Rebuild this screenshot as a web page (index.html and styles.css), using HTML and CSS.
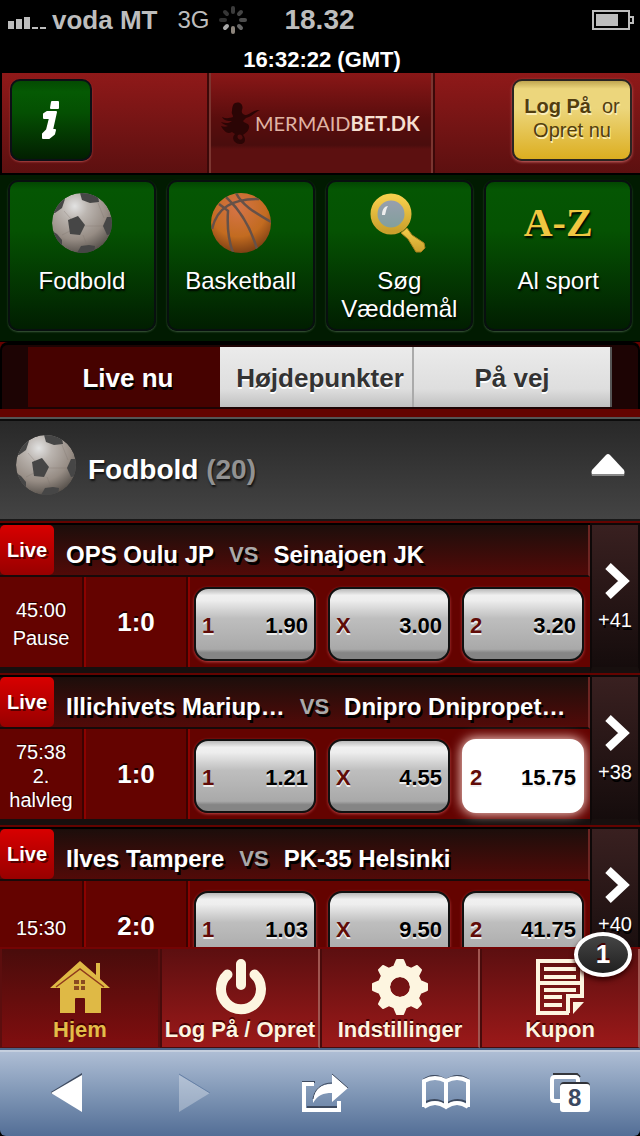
FILE: index.html
```html
<!DOCTYPE html>
<html lang="da">
<head>
<meta charset="utf-8">
<meta name="viewport" content="width=device-width">
<title>MermaidBet.dk</title>
<link rel="stylesheet" href="styles.css">
</head>
<body>
<svg class="defs" aria-hidden="true">
  <defs>
    <radialGradient id="leather" cx="0.38" cy="0.22" r="0.85">
      <stop offset="0" stop-color="#e2e2e2"/><stop offset="0.25" stop-color="#bcb6b1"/><stop offset="0.65" stop-color="#968c84"/><stop offset="1" stop-color="#4a4540"/>
    </radialGradient>
    <radialGradient id="rubber" cx="0.45" cy="0.25" r="0.8">
      <stop offset="0" stop-color="#d67448"/><stop offset="0.6" stop-color="#c26b20"/><stop offset="1" stop-color="#713812"/>
    </radialGradient>
    <linearGradient id="gold" x1="0" y1="0" x2="0" y2="1">
      <stop offset="0" stop-color="#f6cf4c"/><stop offset="1" stop-color="#caa02c"/>
    </linearGradient>
    <linearGradient id="lens" x1="0" y1="0" x2="0" y2="1">
      <stop offset="0" stop-color="#9a9fb0"/><stop offset="1" stop-color="#7f9f9a"/>
    </linearGradient>
    <clipPath id="round"><circle cx="30" cy="30" r="30"/></clipPath>
    <symbol id="football" viewBox="0 0 60 60">
      <g clip-path="url(#round)">
        <circle cx="30" cy="30" r="30" fill="url(#leather)"/>
        <g fill="none" stroke="#7d756e" stroke-opacity="0.3">
          <path d="M12 18l7 8M33 33h19M31 42l4 10M18 38l-8 4M46 10l6 15"/>
        </g>
        <g fill="#464646">
          <path d="M16 27l10-4 7 9-5 10-10-1z"/>
          <path d="M28 0l2 7 8 3 9-1-1-6-8-4z"/>
          <path d="M0 20l3 0 7-5 3-9-5 1-8 9z"/>
          <path d="M60 24l-5 0-4 9 4 9 5-1z"/>
          <path d="M25 60l4-7 8-1 6 1-1 8z"/>
          <path d="M0 38l5 3 5 6 0 8-4-2-7-10z"/>
        </g>
      </g>
    </symbol>
  </defs>
</svg>

<div class="app">
  <div class="status">
    <svg class="signal" viewBox="0 0 38 12" width="38" height="12" fill="#bdbdbd" aria-hidden="true"><path d="M0 4h6v8H0zM8 2h6v10H8zM16 0h6v12h-6zM24 10h6v2h-6zM32 10h6v2h-6z"/></svg>
    <span class="carrier">voda MT</span>
    <span class="network">3G</span>
    <svg class="spinner" viewBox="-14 -14 28 28" width="28" height="28" stroke-width="4" stroke-linecap="round" aria-hidden="true">
      <path d="M0-8v-4" stroke="#3c3c3c"/><path d="M6-6l2-2" stroke="#444"/><path d="M8 0h4" stroke="#4c4c4c"/><path d="M6 6l2 2" stroke="#666"/><path d="M0 8v4" stroke="#8d857c"/><path d="M-6 6l-2 2" stroke="#aaa"/><path d="M-8 0h-4" stroke="#303030"/><path d="M-6-6l-2-2" stroke="#363636"/>
    </svg>
    <span class="time">18.32</span>
    <svg class="battery" viewBox="0 0 42 20" width="42" height="20" aria-hidden="true"><path d="M1 1h36v18H1z" fill="none" stroke="#bdbdbd" stroke-width="2"/><path d="M38 7h3v6h-3" fill="none" stroke="#bdbdbd" stroke-width="2"/><path d="M4 4h22v12H4z" fill="#bdbdbd"/></svg>
  </div>
  <div class="clock">16:32:22 (GMT)</div>

  <header class="header">
    <button class="info" aria-label="Info">
      <svg viewBox="0 0 20 40" width="20" height="40" fill="#fff" stroke="#fff" stroke-linejoin="round" aria-hidden="true"><path d="M11 2h6v6h-7zM3 14l3-2h9l-4 18h3l-1 4-5 4H2v-4l4-4 3-12H3z" stroke-width="2"/></svg>
    </button>
    <a class="logo" href="#">
      <svg viewBox="0 0 40 42" width="40" height="42" aria-hidden="true"><path fill="#2b0505" d="M14 1c5-2 9 2 7 7-1 3 1 4 3 5 5 0 7-5 15-5-5 2-8 7-14 8l-3 3c2 3 7 2 6 7-1 4-4 5-6 7 3 3 3 9-3 9s-9-6-5-10l-3-2c-4 2-7 1-11-6 3 1 5 1 7 0-4-1-6-3-7-4 5 2 9 1 11-1-4 0-8 0-10-4 4 2 8 1 11 0 0-3-2-3-1-6 0-4 1-7 3-8zM17 33c-2 3 2 6 4 4s-1-6-4-4z"/></svg>
      <span class="word">MERMAID<b>BET.DK</b></span>
    </a>
    <a class="login" href="#"><span><b>Log På</b>&nbsp; or</span><span>Opret nu</span></a>
  </header>

  <nav class="sports">
    <a class="tile" href="#"><svg width="60" height="60" aria-hidden="true"><use href="#football"/></svg><span>Fodbold</span></a>
    <a class="tile" href="#">
      <svg viewBox="0 0 60 60" width="60" height="60" aria-hidden="true"><circle cx="30" cy="30" r="30" fill="url(#rubber)"/><g clip-path="url(#round)" fill="none" stroke="#665148" stroke-width="2.500"><path d="M1 36C6 14 22 6 48 6M8 11c4 3 7 5 9 7-1 15 0 28 5 42M15 4c13 12 24 28 31 52M25 0c6 12 18 19 35 29"/></g></svg>
      <span>Basketball</span></a>
    <a class="tile" href="#">
      <svg viewBox="0 0 60 60" width="60" height="60" aria-hidden="true"><path d="M32 40l6-5 5 7 12 8 1 5-4 4h-5l-8-13z" fill="url(#gold)" stroke="#a67f1d"/><circle cx="22" cy="21" r="17" fill="url(#lens)" stroke="url(#gold)" stroke-width="7"/><path d="M13 22c0-6 3-9 6-9-2 3-2 6-3 9z" fill="#eee"/></svg>
      <span>Søg Væddemål</span></a>
    <a class="tile" href="#"><span class="az">A-Z</span><span>Al sport</span></a>
  </nav>

  <div class="tabs">
    <div class="tabrow">
      <button class="tab active">Live nu</button>
      <button class="tab middle">Højdepunkter</button>
      <button class="tab">På vej</button>
    </div>
  </div>

  <main class="events">
    <h2 class="group">
      <svg width="60" height="60" aria-hidden="true"><use href="#football"/></svg>
      <span class="groupname">Fodbold <span class="count">(20)</span></span>
      <svg class="fold" viewBox="0 0 34 24" width="34" height="24" aria-hidden="true"><path d="M15 3q2-2 4 0l14 15q1 3 0 5H1q-1-2 0-5z" fill="#888"/><path d="M15 2q2-2 4 0l14 15q1 2 0 4H1q-1-2 0-4z" fill="#fff"/></svg>
    </h2>

    <article class="match">
      <div class="main">
        <div class="head"><span class="live">Live</span><div class="teams"><span>OPS Oulu JP</span><span class="vs">VS</span><span>Seinajoen JK</span></div></div>
        <div class="body">
          <div class="period loose"><span>45:00</span><span>Pause</span></div>
          <div class="score">1:0</div>
          <div class="odds">
            <button class="odd"><span class="pick">1</span><span>1.90</span></button>
            <button class="odd"><span class="pick">X</span><span>3.00</span></button>
            <button class="odd"><span class="pick">2</span><span>3.20</span></button>
          </div>
        </div>
      </div>
      <a class="more" href="#"><svg viewBox="0 0 28 40" width="28" height="40" aria-hidden="true"><path d="M5 5l16 15L5 35" fill="none" stroke="#fff" stroke-width="8"/></svg><span>+41</span></a>
    </article>

    <article class="match">
      <div class="main">
        <div class="head"><span class="live">Live</span><div class="teams"><span>Illichivets Mariup…</span><span class="vs">VS</span><span>Dnipro Dnipropet…</span></div></div>
        <div class="body">
          <div class="period"><span>75:38</span><span>2. halvleg</span></div>
          <div class="score">1:0</div>
          <div class="odds">
            <button class="odd"><span class="pick">1</span><span>1.21</span></button>
            <button class="odd"><span class="pick">X</span><span>4.55</span></button>
            <button class="odd chosen"><span class="pick">2</span><span>15.75</span></button>
          </div>
        </div>
      </div>
      <a class="more" href="#"><svg viewBox="0 0 28 40" width="28" height="40" aria-hidden="true"><path d="M5 5l16 15L5 35" fill="none" stroke="#fff" stroke-width="8"/></svg><span>+38</span></a>
    </article>

    <article class="match">
      <div class="main">
        <div class="head"><span class="live">Live</span><div class="teams"><span>Ilves Tampere</span><span class="vs">VS</span><span>PK-35 Helsinki</span></div></div>
        <div class="body">
          <div class="period"><span>15:30</span></div>
          <div class="score">2:0</div>
          <div class="odds">
            <button class="odd"><span class="pick">1</span><span>1.03</span></button>
            <button class="odd"><span class="pick">X</span><span>9.50</span></button>
            <button class="odd"><span class="pick">2</span><span>41.75</span></button>
          </div>
        </div>
      </div>
      <a class="more" href="#"><svg viewBox="0 0 28 40" width="28" height="40" aria-hidden="true"><path d="M5 5l16 15L5 35" fill="none" stroke="#fff" stroke-width="8"/></svg><span>+40</span></a>
    </article>
  </main>

  <nav class="menu">
    <a class="item current" href="#">
      <svg viewBox="0 0 60 56" width="60" height="56" aria-hidden="true"><path fill="#dfb945" d="M0 29L30 2l16 14V4h4v16l10 9h-9v25H35V40q0-1-1-1h-8q-1 0-1 1v14H10V29z"/><path d="M6 28L30 10l24 18" fill="none" stroke="#8f3a1c" stroke-width="1.500"/><path d="M24 21h5v4h-5zM31 21h4v4h-4zM24 27h5v4h-5zM31 27h4v4h-4z" fill="#8a4a20"/></svg>
      <span>Hjem</span></a>
    <a class="item" href="#">
      <svg viewBox="0 0 56 56" width="56" height="56" fill="none" stroke="#fdf5e0" stroke-linecap="round" aria-hidden="true"><path d="M15.500 15.500A20 20 0 1 0 42.500 15.500M29 5v21" stroke-width="10"/></svg>
      <span>Log På / Opret</span></a>
    <a class="item" href="#">
      <svg viewBox="-28 -28 56 56" width="56" height="56" aria-hidden="true"><g fill="none" stroke="#fdf5e0"><circle r="16" stroke-width="12"/></g><path fill="#fdf5e0" stroke="#fdf5e0" stroke-linejoin="round" stroke-width="2" fill-rule="evenodd" d="M-3-27H3L6-20 11-18 17-21 21-17 18-11 20-6 27-3V3L20 6 18 11 21 17 17 21 11 18 6 20 3 27H-3L-6 20-11 18-17 21-21 17-18 11-20 6-27 3V-3L-20-6-18-11-21-17-17-21-11-18-6-20zM0-11A11 11 0 1 0 0 11 11 11 0 1 0 0-11z"/></svg>
      <span>Indstillinger</span></a>
    <a class="item" href="#">
      <svg viewBox="0 0 48 56" width="48" height="56" aria-hidden="true"><g fill="none" stroke="#fdf5e0"><path stroke-width="4" d="M33 54H2V2h44v36M2 24h44M32 54V37h16"/><path stroke-width="4" d="M8 10h32M8 18h32M8 31h32M8 38h18M8 46h18"/></g><path fill="#fdf5e0" d="M37 43h11L37 55z"/></svg>
      <span>Kupon</span><span class="badge">1</span></a>
  </nav>

  <div class="browser">
    <button aria-label="Tilbage"><svg viewBox="0 0 32 40" width="32" height="40" aria-hidden="true"><path d="M31 0v4L0 21v-2z" fill="#3e4b60"/><path d="M31 2v37L0 20z" fill="#fff"/></svg></button>
    <button aria-label="Frem"><svg viewBox="0 0 32 40" width="32" height="40" aria-hidden="true"><path d="M1 2v37l31-19z" fill="#fff" fill-opacity="0.300"/><path d="M1 1l31 19" stroke="#6680a6"/></svg></button>
    <button class="share" aria-label="Del"><svg viewBox="0 0 46 40" width="46" height="40" aria-hidden="true"><path d="M13 9H0M5 34h30" stroke="#3e4b60" stroke-width="2"/><path d="M12 11H2v26h35v-9" fill="none" stroke="#fff" stroke-width="4"/><path d="M30 1v10C17 11 10 18 11 30c5-8 10-10 19-10v9l16-14z" fill="#fff"/><path d="M30 1l16 14M11 26c1-9 8-16 19-16" fill="none" stroke="#3e4b60"/></svg></button>
    <button aria-label="Bogmærker"><svg viewBox="0 0 48 36" width="48" height="36" aria-hidden="true"><path d="M1 5q11-8 23 0 12-8 23 0M4 27q10-5 20 2 10-7 20-2" fill="none" stroke="#3e4b60" stroke-width="2"/><path d="M2 32V6q11-6 22 0 11-6 22 0v26M24 6v26M2 32q11-8 22 0 11-8 22 0" fill="none" stroke="#fff" stroke-width="4"/></svg></button>
    <button class="pages" aria-label="Sider"><svg viewBox="0 0 40 40" width="40" height="40" aria-hidden="true"><path d="M3 1h24l3 3" fill="none" stroke="#35373c" stroke-width="2"/><path d="M10 28H5q-3 0-3-3V7q0-3 3-3h20q3 0 3 3v4" fill="none" stroke="#fff" stroke-width="4"/><rect x="10" y="9" width="30" height="10" rx="4" fill="#303238"/><rect x="10" y="11" width="30" height="28" rx="3" fill="#fff"/></svg><span class="pagecount">8</span></button>
  </div>
</div>
</body>
</html>
```

FILE: styles.css
```css
* { box-sizing: border-box; }

body {
  margin: 0;
  background: #000;
  color: #fff;
  font-family: "Liberation Sans", Arial, sans-serif;
  font-size: 20px;
}

a { color: inherit; text-decoration: none; }
button { padding: 0; border: 0; background: none; color: inherit; font: inherit; }
svg { display: block; flex: none; }
.defs { position: absolute; width: 0; height: 0; }

.app {
  display: flex;
  flex-direction: column;
  height: 100vh;
  overflow: hidden;
}
.app > * { flex: none; }

/* phone status line */
.status {
  display: grid;
  grid-template-columns: 38px auto auto 28px 1fr auto;
  align-items: center;
  height: 40px;
  padding: 0 6px 0 8px;
  color: #bdbdbd;
  font-size: 26px;
  font-weight: bold;
}
.signal { margin-top: 6px; }
.carrier { margin-left: 6px; }
.network { margin: 0 10px 0 20px; font-size: 24px; font-weight: normal; }
.time { padding-left: 37px; font-size: 28px; }

.clock {
  height: 33px;
  padding-left: 4px;
  line-height: 40px;
  text-align: center;
  font-size: 22px;
  font-weight: bold;
}

/* header */
.header {
  display: grid;
  grid-template-columns: 1fr 224px 1fr;
  align-items: center;
  height: 102px;
  border: solid #000;
  border-width: 0 0 2px 2px;
  background: linear-gradient(#8f1919, #5c1010);
}
.info {
  display: grid;
  place-items: center;
  width: 82px;
  height: 82px;
  margin: 0 0 6px 8px;
  border: 2px solid #0c1016;
  border-radius: 10px;
  background: linear-gradient(#044a02, #055a03 14%, #045002 40%, #021f01);
  box-shadow: 0 1px 2px #a44;
}
.logo {
  display: flex;
  align-items: center;
  align-self: stretch;
  padding-left: 10px;
  border: solid #7c3530;
  border-width: 0 2px;
  background: linear-gradient(#8a1717, #5a0d0d 45%, #4a0d0d 72%, #5c1010 76%);
  box-shadow: -2px 0 #3c0808, 2px 0 #3c0808;
}
.word {
  margin-left: -6px;
  color: #e0b4a4;
  font-family: Lato, sans-serif;
  font-size: 20px;
}
.word b { color: #f6dfd0; }
.login {
  display: flex;
  flex-direction: column;
  justify-content: center;
  justify-self: end;
  width: 120px;
  height: 82px;
  margin: 0 8px 6px 0;
  padding-bottom: 4px;
  border: 2px solid #2a2522;
  border-radius: 10px;
  background: linear-gradient(#c0a650, #ecd67c 10%, #ecd67c 35%, #dcae20);
  box-shadow: 0 1px 3px #c66;
  color: #513d10;
  line-height: 24px;
  text-align: center;
  text-shadow: 1px 2px #fbedb8;
}

/* sports */
.sports {
  display: grid;
  grid-template-columns: repeat(4, 1fr);
  gap: 11px;
  height: 167px;
  padding: 5px 8px 10px;
  border-bottom: 1px solid #000;
  background: #011b01;
}
.tile {
  display: flex;
  flex-direction: column;
  align-items: center;
  gap: 14px;
  padding: 11px 10px 0;
  border: 2px solid #08100f;
  border-radius: 10px;
  background: linear-gradient(#034602, #055603 5%, #055202 33%, #011e01);
  box-shadow: 0 1px 2px #3c573c;
  font-size: 24px;
  line-height: 28px;
  text-align: center;
  text-shadow: 1px 2px 2px #000;
}
.az {
  height: 60px;
  color: #f0c741;
  font-family: "Liberation Serif", serif;
  font-size: 40px;
  font-weight: bold;
  line-height: 60px;
}

/* tabs */
.tabs {
  height: 75px;
  border-bottom: 8px solid #640300;
  background: #640300;
}
.tabrow {
  display: grid;
  grid-template-columns: 192px 194px 1fr;
  height: 67px;
  padding: 2px 26px;
  border: solid #000;
  border-width: 3px 2px 0;
  border-radius: 8px 8px 0 0;
  background: #1d0404;
}
.tab {
  padding-top: 2px;
  border-right: 2px solid #aaa;
  background: linear-gradient(#ebebeb, #dedede 70%, #c0c0c0);
  color: #333;
  font-size: 26px;
  font-weight: bold;
  line-height: 58px;
  text-shadow: 0 2px #fff;
}
.tab:last-child { border-color: #555; }
.tab.active {
  padding-left: 8px;
  border: 0;
  background: #460200;
  color: #fff;
  text-shadow: 1px 3px #000;
}
.tab.middle { padding-left: 8px; }

/* events */
.app > .events { flex: 1 1 0; min-height: 0; overflow: hidden; background: #640300; }
.group {
  display: flex;
  align-items: center;
  gap: 12px;
  height: 104px;
  margin: 0;
  padding: 0 15px 0 16px;
  border-top: 2px solid #555;
  border-bottom: 2px solid #181818;
  background: linear-gradient(#282828, #444);
  box-shadow: inset 0 2px #0c0c0c;
  font-size: 28px;
  text-shadow: 1px 2px 2px #111;
}
.groupname { flex: 1; padding-top: 2px; }
.group > svg:first-child { margin-top: -8px; }
.fold { margin-top: -8px; }
.count { color: #929292; }

.match {
  display: flex;
  border: solid #640300;
  border-width: 2px 0 0;
}
.main { flex: 1; min-width: 0; border-top: 2px solid #000; border-bottom: 6px solid #170f0e; }
.head {
  display: flex;
  height: 52px;
  border-right: 2px solid #6d2522;
  border-bottom: 2px solid #170a09;
  background: linear-gradient(#1c0e0b, #520a08);
}
.live {
  width: 54px;
  border-radius: 5px;
  background: linear-gradient(#d80000, #980000);
  line-height: 50px;
  text-align: center;
  font-weight: bold;
  text-shadow: 2px 2px #500;
}
.teams {
  display: flex;
  align-items: center;
  gap: 15px;
  padding: 10px 0 0 12px;
  font-size: 24px;
  font-weight: bold;
  white-space: nowrap;
  text-shadow: 2px 3px #000;
}
.vs { color: #aaa; font-size: 22px; }

.body {
  display: grid;
  grid-template-columns: 84px 104px 1fr;
  height: 90px;
  background: #640300;
}
.period {
  display: flex;
  flex-direction: column;
  justify-content: center;
  padding: 4px 2px 0;
  border-right: 2px solid #3c0200;
  line-height: 24px;
  text-align: center;
  text-shadow: 1px -1px #200;
}
.loose { line-height: 28px; }
.score {
  display: grid;
  place-items: center;
  border: solid #8c0200;
  border-width: 0 2px;
  border-right-color: #3c0200;
  font-size: 26px;
  font-weight: bold;
  text-shadow: 0 -2px #200;
}
.odds {
  display: grid;
  grid-template-columns: repeat(3, 1fr);
  gap: 12px;
  padding: 10px 6px 6px 4px;
  border-left: 2px solid #8c0200;
}
.odd {
  display: flex;
  align-items: center;
  justify-content: space-between;
  padding: 4px 6px 0;
  border: 2px solid #111;
  border-radius: 14px;
  background: linear-gradient(#b9b9b9, #f0f0f0 9%, #eee 16%, #bebebe 42%, #a9a9a9 86%, #858585 91%);
  box-shadow: 0 1px 3px #b44;
  color: #000;
  font-size: 22px;
  font-weight: bold;
  text-shadow: 0 2px #eee;
}
.pick { color: #600c08; }
.chosen {
  border-color: #fff;
  background: #fff;
  box-shadow: 0 0 12px 1px #ffd8d0;
}

.more {
  display: flex;
  flex-direction: column;
  align-items: center;
  gap: 9px;
  width: 50px;
  padding: 36px 0 0 4px;
  border: 2px solid #0e0808;
  border-bottom: 6px solid #170f0e;
  background: linear-gradient(#392020, #150c0c);
  line-height: 20px;
  text-shadow: 1px 3px #000;
}
.more span { margin-left: -4px; }

/* bottom menu */
.menu {
  display: grid;
  grid-template-columns: repeat(4, 1fr);
  height: 101px;
  border-top: 2px solid #740404;
}
.item {
  position: relative;
  display: flex;
  flex-direction: column;
  align-items: center;
  padding-top: 10px;
  border: solid #480b0b;
  border-width: 0 2px 1px;
  border-right-color: #a05550;
  background: linear-gradient(#5c0f10, #9b1919);
  color: #fdf5e0;
  font-size: 22px;
  font-weight: bold;
  line-height: 30px;
  white-space: nowrap;
  text-shadow: 0 -2px #400;
}
.current {
  border-color: #5c0e0e;
  background: linear-gradient(#490c0b, #800e0f);
  color: #e3bd48;
}
.badge {
  position: absolute;
  top: -17px;
  right: 6px;
  width: 58px;
  height: 45px;
  border: 4px solid #fff;
  border-radius: 50%;
  background: linear-gradient(#454545, #202020);
  box-shadow: 0 3px 5px #300;
  color: #fff;
  font-size: 26px;
  line-height: 36px;
  text-align: center;
}

/* browser toolbar */
.browser {
  display: grid;
  grid-template-columns: repeat(5, 1fr);
  height: 88px;
  padding: 0 4px;
  border-top: 2px solid #4b6388;
  border-radius: 0 0 6px 6px;
  background: linear-gradient(#b0bfd6, #8097b6 50%, #536e96);
  box-shadow: inset 0 2px #c5cfdf;
}
.browser button { display: grid; place-items: center; }
.browser .share { padding-left: 10px; }
.pages > * { grid-area: 1 / 1; }
.pagecount {
  padding: 10px 0 0 10px;
  color: #3b4961;
  font-size: 24px;
  font-weight: bold;
}
.browser .pages { padding-right: 6px; }
```
